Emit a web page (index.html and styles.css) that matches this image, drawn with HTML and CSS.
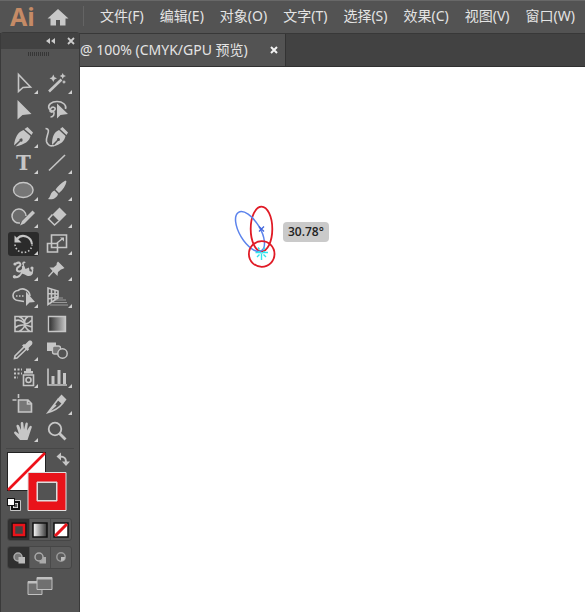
FILE: index.html
```html
<!DOCTYPE html>
<html lang="zh-CN">
<head>
<meta charset="utf-8">
<meta name="viewport" content="width=device-width, initial-scale=1">
<title>Illustrator</title>
<link rel="stylesheet" href="styles.css">
</head>
<body>
<div class="app">
  <header class="menubar">
    <span class="logo">Ai</span>
    <button class="home" aria-label="主页"><svg width="22" height="18" viewBox="0 0 22 18"><path d="M11 1 21.500 10.500H18.500V17.500H13V12H9V17.500H3.500V10.500H.5Z" fill="#c8c8c8"/></svg></button>
    <nav class="menus">
      <button>文件(F)</button>
      <button>编辑(E)</button>
      <button>对象(O)</button>
      <button>文字(T)</button>
      <button>选择(S)</button>
      <button>效果(C)</button>
      <button>视图(V)</button>
      <button>窗口(W)</button>
    </nav>
  </header>
  <div class="tabs">
    <div class="tab">
      <span>@ 100% (CMYK/GPU 预览)</span>
      <button aria-label="关闭文档"><svg width="8" height="8" viewBox="0 0 8 8"><path d="M1 1 7 7M7 1 1 7" stroke="#f2f2f2" stroke-width="2"/></svg></button>
    </div>
  </div>
  <main class="canvas">
    <svg class="artwork" width="48" height="72" viewBox="230 200 48 72" fill="none" stroke-width="1.8">
      <ellipse cx="261.500" cy="229" rx="10.800" ry="22.300" stroke="#e01b26"/>
      <ellipse cx="250" cy="231.500" rx="10.300" ry="22.300" transform="rotate(-31 250 231.500)" stroke="#5c83ec" stroke-width="1.500"/>
      <circle cx="261.700" cy="254" r="12.800" stroke="#e01b26"/>
      <path d="M259 226.500 264 231.500M264 226.500 259 231.500" stroke="#4267dc" stroke-width="1.300"/>
      <g stroke="#30e4ed" stroke-width="1.400"><path d="M258.500 251A3.200 3.200 0 0 0 264.500 251M261.500 254V260M255.500 252.500H259M264 252.500H268M257 257 259.500 254.500M266 257 263.500 254.500M258 247.500 259.500 249.500M265 247.500 263.500 249.500"/></g>
    </svg>
    <output class="angle">30.78°</output>
  </main>

  <aside class="panel">
    <div class="panel-head">
      <button aria-label="折叠"><svg width="9" height="7" viewBox="0 0 9 7"><path d="M4 0V6L0 3ZM9 0V6L5 3Z" fill="#ccc"/></svg></button>
      <button aria-label="关闭"><svg width="8" height="8" viewBox="0 0 8 8"><path d="M1 1 7 7M7 1 1 7" stroke="#ccc" stroke-width="1.800"/></svg></button>
    </div>
    <div class="grip"></div>
    <div class="tools">
      <button class="more" aria-label="选择"><svg viewBox="0 0 34 26"><path class="line" d="M12.500 4.500V21.500L17 17.500 24.500 17Z"/></svg></button>
      <button class="more" aria-label="魔棒"><svg viewBox="0 0 34 26"><path d="M9 21.500 21.500 9.500" class="line" stroke-width="2.600"/><path class="solid" d="M13.300 4.500 14.500 7.300 17 8.300 14.500 9.500 13.300 12 12 9.500 9.500 8.300 12 7.300ZM22.700 3 23.700 5 26 6 23.700 7 22.700 9 21.700 7 19.700 6 21.700 5ZM24 10 24.700 11.300 26 12 24.700 12.700 24 14 23.300 12.700 22 12 23.300 11.300Z"/></svg></button>

      <button aria-label="直接选择"><svg viewBox="0 0 34 26"><path class="solid" d="M11.500 3V22.500L16.500 18 25.500 17Z"/></svg></button>
      <button aria-label="套索"><svg viewBox="0 0 34 26"><path class="line" d="M25.500 12C27 8 22.500 4.500 17 4.500S7.500 8 9 11.500C10 14 14 15 15 12.500S12 9 10.500 12 12 16 13.500 14C15 17 13.500 20 10.500 20"/><path class="solid" d="M17 6.500V21.500L20.500 18 28 17Z"/></svg></button>

      <button class="more" aria-label="钢笔"><svg viewBox="0 0 34 26"><path class="solid" d="M18.500 5 21.500 3 27 8.500 25.500 11ZM17.500 6 24.500 12C23.500 17 19 20.500 9.500 22.500L14.500 17.500A1.600 1.600 0 1 0 13.500 16.500L8 21.500C9 13 12 8 17.500 6Z"/></svg></button>
      <button aria-label="曲率"><svg viewBox="0 0 34 26"><path class="solid" d="M20 5 22.500 3 28 8.500 26.500 11ZM19 6 25.500 12C24.500 17 21 20.500 13 22.500L18 17A1.500 1.500 0 1 0 17 16L12 21C12 13 14 8 19 6Z"/><path class="line" d="M5.500 4.500C12 5 5.500 12 6.500 17.500 7.500 21.500 10.500 22.500 14 21.500"/></svg></button>

      <button class="more" aria-label="文字"><svg viewBox="0 0 34 26"><text class="type" x="17.500" y="20" text-anchor="middle">T</text></svg></button>
      <button class="more" aria-label="直线段"><svg viewBox="0 0 34 26"><path class="line" d="M9 20.500 25 5"/></svg></button>

      <button class="more" aria-label="椭圆"><svg viewBox="0 0 34 26"><ellipse cx="17.300" cy="13" rx="9.800" ry="7.500" fill="#777" stroke="#c6c6c6" stroke-width="1.400"/></svg></button>
      <button class="more" aria-label="画笔"><svg viewBox="0 0 34 26"><path class="solid" d="M25.500 3.500 26.500 4.500C25.500 9 23 13 19 16L15.500 12.500C18 9 21 6 25.500 3.500ZM14.500 13.500 18 17C17 21 13 23 8 22 11 20 10 15 14.500 13.500Z"/></svg></button>

      <button class="more" aria-label="Shaper"><svg viewBox="0 0 34 26"><path d="M14 19A7 7 0 1 1 20 12" fill="#6c6c6c" stroke="#c6c6c6" stroke-width="1.500"/><path class="solid" d="M26.500 6.500 29 9 18.500 19.500 14 21.500 16 17Z"/></svg></button>
      <button class="more" aria-label="橡皮擦"><svg viewBox="0 0 34 26"><path class="solid" d="M19.500 3.500 26.500 10.500 19.500 17.500 12.500 10.500Z"/><path class="line" d="M12.500 10.500 8.500 15 14.500 21 19 17"/></svg></button>

      <button class="more active" aria-label="旋转"><svg viewBox="0 0 34 26"><path class="line" stroke-width="2" d="M11 8C16 2 25.500 5.500 26 13.500"/><path class="solid" d="M8.500 4.500V11.500H15.500Z"/><path class="line" stroke-dasharray="1.500 2" d="M9 13.500C10 24 25 24 26 14"/></svg></button>
      <button class="more" aria-label="比例缩放"><svg viewBox="0 0 34 26"><path class="line" d="M11.500 4H26.500V16.500H11.500ZM7.500 12.500H17.500V21H7.500ZM17 12 22 8"/><path class="solid" d="M20 6.500H24V10.500Z"/></svg></button>

      <button class="more" aria-label="变形"><svg viewBox="0 0 34 26"><path class="line" stroke-width="2" d="M10 6.500C14 4 16 8 13 9.500 10 11 10 14.500 13.500 14.500 17 14.500 18 11 16.500 9"/><path class="solid" d="M7.500 19C11 20 14 18 15 15L17.500 7 19.500 12 23 10.500 23.500 14 27 15.500C27 18 24 20 20.500 18.500 18 17.500 17 16.500 16 17 14 21 10 22 7.500 20.500Z"/><path class="line" d="M23 16.500C26 17.500 27.500 14 26 11.500M17.500 8C16 6 18 4.500 19 6"/><circle class="solid" cx="9" cy="7" r="1.600"/><circle class="solid" cx="26" cy="11" r="1.600"/><circle class="solid" cx="8.500" cy="19.700" r="1.700"/></svg></button>
      <button class="more" aria-label="操控变形"><svg viewBox="0 0 34 26"><path class="solid" d="M18 4.500 24.500 11 22.500 12 21 12.500 18 15 17.500 19 13.500 15 9 20 8 19 12.500 14 9.500 10.500 13.500 10.500 16.500 8 16.800 6Z"/></svg></button>

      <button class="more" aria-label="形状生成器"><svg viewBox="0 0 34 26"><path class="line" d="M12 16.500A5 5 0 1 1 12 6.500 7.500 7.500 0 0 1 24 12M12 16.500 18 17.500"/><path class="line" stroke-dasharray="1.500 1.500" d="M10 12H19"/><path class="solid" d="M20 7.500V22L23.500 18.500 29 18Z"/></svg></button>
      <button class="more" aria-label="透视网格"><svg viewBox="0 0 34 26"><path class="line" d="M8 4V20.500L18 14V7ZM11.500 5V18M15 6V16M8 9.500 18 10M8 15 18 12.500"/><path d="M18 14H23M16 16H26M13 18.500H27M10 21H28" stroke="#999" stroke-width="1.200"/></svg></button>

      <button aria-label="网格"><svg viewBox="0 0 34 26"><path class="line" d="M9 5.500H26V20.500H9ZM13 5.500C21 10 21 16 13 20.500M22 5.500C17 9 17 16 24 20.500M9 10C13 8 16 10 18 12S23 12 26 9M9 17C13 13 18 13 26 16"/></svg></button>
      <button aria-label="渐变"><svg viewBox="0 0 34 26"><defs><linearGradient id="g1"><stop stop-color="#2d2d2d"/><stop offset="1" stop-color="#c4c4c4"/></linearGradient></defs><path d="M8.500 5.500H25.500V20.500H8.500Z" fill="url(#g1)" stroke="#c6c6c6" stroke-width="1.400"/></svg></button>

      <button class="more" aria-label="吸管"><svg viewBox="0 0 34 26"><path class="line" d="M18.500 9.500 9 19 8.500 21.500 11 21 21 11.500"/><path class="solid" d="M16 8.500 18 7 19 7.500 22.500 4C25 2.500 27.500 5 26 7.500L22.500 11 23 12.500 21.500 14Z"/></svg></button>
      <button aria-label="混合"><svg viewBox="0 0 34 26"><path class="solid" d="M7 5.500H16V14H7Z"/><rect x="12.500" y="9" width="8" height="8" rx="2" fill="#777" stroke="#c6c6c6" stroke-width="1.300"/><circle cx="22.500" cy="16.500" r="4.700" fill="#535353" stroke="#c6c6c6" stroke-width="1.500"/></svg></button>

      <button class="more" aria-label="符号喷枪"><svg viewBox="0 0 34 26"><path class="line" d="M17.500 11H27.500V21.500H17.500Z"/><path class="solid" d="M20 4.500H25V7H27V9.500H18V7H20Z"/><circle class="line" cx="22.500" cy="16" r="2.500"/><path d="M8 5.500H16M8 9.500H16M8 13.500H12" class="line" stroke-width="2" stroke-dasharray="2 1.500"/></svg></button>
      <button class="more" aria-label="柱形图"><svg viewBox="0 0 34 26"><path class="line" d="M8 4.500V21H27"/><path class="solid" d="M11.500 12H14.500V20H11.500ZM17.500 6H20.500V20H17.500ZM23 9H26V20H23Z"/></svg></button>

      <button aria-label="画板"><svg viewBox="0 0 34 26"><path d="M12.500 9H22L25.500 12.500V21H12.500Z" fill="#777"/><path class="line" d="M12.500 3V7M6.500 9H10.500M12.500 9H22L25.500 12.500V21H12.500ZM21.500 9V13H25.500"/></svg></button>
      <button class="more" aria-label="切片"><svg viewBox="0 0 34 26"><path class="line" d="M18 8.500 8 21.500C15 19.500 19 17 22.500 12.500ZM8 21.500 16 14"/><path class="solid" d="M17.500 8 21.500 3.500 26.500 8.500 23 13Z"/></svg></button>

      <button class="more" aria-label="抓手"><svg viewBox="0 0 34 26"><path class="solid" d="M14 22 8.300 15.500C7.500 14 9 13 10.300 14L13 16 10.500 8.500C10 6.500 12.200 6 13 7.500L15 12 14.700 5.500C14.700 3.500 17 3.500 17.300 5.300L18 11.500 19.500 5.500C20 4 22 4.500 21.800 6L21 12.500 23.500 8.500C24.500 7 26.300 8 25.700 9.500L23.500 16 21.500 22Z"/></svg></button>
      <button aria-label="缩放"><svg viewBox="0 0 34 26"><circle class="line" cx="15" cy="11" r="6.300" stroke-width="1.800"/><path class="line" stroke-width="2.800" d="M19.500 15.500 25.500 21.500"/></svg></button>
    </div>

    <div class="colors">
      <svg width="68" height="64" viewBox="6 449 68 64">
        <rect x="7.500" y="452.500" width="38" height="38" fill="#fff" stroke="#222"/>
        <path d="M8 490 45 453" stroke="#ee1119" stroke-width="2.600"/>
        <path d="M28 472.500H66V510.500H28ZM37 482V501H57V482Z" fill="#e9131a" fill-rule="evenodd" stroke="#e0e0e0"/>
        <rect x="37.500" y="482.500" width="19" height="18" fill="#535353" stroke="#ddd"/>
        <path d="M60 456.500C64.500 456.500 66 458 66 462" fill="none" stroke="#c6c6c6" stroke-width="2"/>
        <path d="M56.500 456.500 61 452.500V460.500ZM62 461.500H70L66 466Z" fill="#c6c6c6"/>
        <rect x="12" y="502" width="7" height="7" fill="none" stroke="#eee" stroke-width="3.500"/>
        <rect x="12" y="502" width="7" height="7" fill="none" stroke="#111" stroke-width="2"/>
        <rect x="7.500" y="498.500" width="7" height="7" fill="#fff" stroke="#111"/>
      </svg>
    </div>
    <div class="segment">
      <button class="on" aria-label="颜色"><svg width="16" height="16" viewBox="0 0 16 16"><rect x=".5" y=".5" width="15" height="15" fill="#111"/><rect x="3" y="3" width="10" height="10" fill="#444" stroke="#e9131a" stroke-width="2.500"/></svg></button>
      <button aria-label="渐变填色"><svg width="16" height="16" viewBox="0 0 16 16"><defs><linearGradient id="g2"><stop stop-color="#fff"/><stop offset="1" stop-color="#333"/></linearGradient></defs><rect x="1" y="1" width="14" height="14" fill="url(#g2)" stroke="#111" stroke-width="1.500"/></svg></button>
      <button aria-label="无"><svg width="16" height="16" viewBox="0 0 16 16"><rect x="1" y="1" width="14" height="14" fill="#fff" stroke="#111" stroke-width="1.500"/><path d="M2 14 14 2" stroke="#e9131a" stroke-width="3"/></svg></button>
    </div>
    <div class="segment">
      <button class="on" aria-label="正常绘图"><svg width="14" height="14" viewBox="0 0 14 14"><circle cx="6" cy="6" r="4" fill="#777" stroke="#aaa" stroke-width="1.500"/><path d="M6.500 6H13V12.500H6.500Z" fill="#bbb"/></svg></button>
      <button aria-label="背面绘图"><svg width="14" height="14" viewBox="0 0 14 14"><path d="M6.500 6H13V12.500H6.500Z" fill="#aaa"/><circle cx="6" cy="6" r="4" fill="#5d5d5d" stroke="#aaa" stroke-width="1.500"/></svg></button>
      <button aria-label="内部绘图"><svg width="14" height="14" viewBox="0 0 14 14"><circle cx="7" cy="6" r="4.200" fill="none" stroke="#999" stroke-width="1.500"/><path d="M7 6H11A4 4 0 0 1 7 10Z" fill="#bbb"/></svg></button>
    </div>
    <button class="screen" aria-label="更改屏幕模式"><svg width="26" height="20" viewBox="0 0 26 20"><path d="M1 5.500H15V18.500H1Z" fill="#707070" stroke="#c0c0c0"/><path d="M1 6.500H15" stroke="#c0c0c0" stroke-width="2"/><path d="M10 1.500H25V13.500H10Z" fill="#707070" stroke="#c0c0c0"/><path d="M10 2.500H25" stroke="#c0c0c0" stroke-width="2"/></svg></button>
  </aside>
</div>
</body>
</html>
```
FILE: styles.css
```css
* {
  box-sizing: border-box;
}

body {
  margin: 0;
  font: 14px/20px "Noto Sans", "Noto Sans CJK SC", sans-serif;
  color: #e4e4e4;
  background: #fff;
}

button {
  padding: 0;
  border: 0;
  background: none;
  color: inherit;
  font: inherit;
  white-space: nowrap;
}

svg {
  display: block;
}

.app {
  position: relative;
  display: flex;
  flex-direction: column;
  min-height: 100vh;
  overflow: hidden;
}

.menubar {
  display: flex;
  align-items: center;
  height: 34px;
  padding: 0 8px 3px 10px;
  background: #535353;
  border-top: 1px solid #686868;
  border-bottom: 1px solid #383838;
}

.logo {
  width: 37px;
  color: #c58b66;
  font: bold 25px/28px "Liberation Sans Narrow", "Noto Sans", sans-serif;
}

.home {
  padding: 2px 14px 0 0;
  border-right: 1px solid #646464;
}

.menus {
  display: flex;
  gap: 16px;
  margin-left: 16px;
}

.tabs {
  display: flex;
  height: 33px;
  padding-left: 80px;
  background: #424242;
  border-bottom: 1px solid #303030;
}

.tab {
  display: flex;
  align-items: center;
  gap: 22px;
  padding-right: 7px;
  background: #535353;
  border-right: 1px solid #333;
}

.tab span {
  white-space: nowrap;
}

.canvas {
  position: relative;
  flex: 1;
  background: #fff;
}

.artwork {
  position: absolute;
  left: 230px;
  top: 133px;
}

.angle {
  position: absolute;
  left: 283px;
  top: 155px;
  padding: 0 5px;
  border-radius: 4px;
  background: #cacaca;
  color: #222;
  font: 600 12px/20px "Open Sans", sans-serif;
}

.panel {
  position: absolute;
  left: 0;
  top: 32px;
  bottom: 0;
  width: 80px;
  padding: 0 5px;
  background: #535353;
  border: 1px solid #3a3a3a;
  border-bottom: 0;
  border-radius: 4px 4px 0 0;
}

.panel-head {
  display: flex;
  align-items: center;
  justify-content: flex-end;
  gap: 12px;
  height: 16px;
  margin: 0 -5px;
  padding-right: 4px;
  background: #424242;
}

.grip {
  width: 22px;
  height: 4px;
  margin: 3px auto 14px 22px;
  background: repeating-linear-gradient(90deg, #363636 0 1px, #535353 1px 2px);
}

.tools {
  display: grid;
  grid-template-columns: repeat(2, 34px);
  grid-template-rows: repeat(14, 1fr);
  height: 374px;
  align-items: center;
}

.tools button {
  position: relative;
}

.tools svg {
  width: 34px;
  height: 26px;
  position: relative;
}

.active::before {
  content: "";
  position: absolute;
  inset: 1px 1px 1px 2px;
  border-radius: 3px;
  background: #2b2b2b;
}

.more::after {
  content: "";
  position: absolute;
  right: 2px;
  bottom: 2px;
  border-left: 4px solid transparent;
  border-bottom: 4px solid #d0d0d0;
}

.line {
  fill: none;
  stroke: #c6c6c6;
}

.line:not([stroke-width]) {
  stroke-width: 1.6px;
}

.solid {
  fill: #c6c6c6;
}

.type {
  fill: #c6c6c6;
  font: bold 20px "DejaVu Serif", serif;
}

.colors {
  margin-top: 4px;
  border-top: 1px solid #474747;
}

.segment {
  display: grid;
  grid-template-columns: repeat(3, 1fr);
  height: 23px;
  margin: 5px 2px 0 1px;
  overflow: hidden;
  border: 1px solid #464646;
  border-radius: 3px;
  background: #5a5a5a;
}

.segment button {
  display: grid;
  place-items: center;
}

.segment button + button {
  border-left: 1px solid #4a4a4a;
}

.segment .on {
  background: #303030;
}

.screen {
  margin: 7px 0 0 21px;
}
```
